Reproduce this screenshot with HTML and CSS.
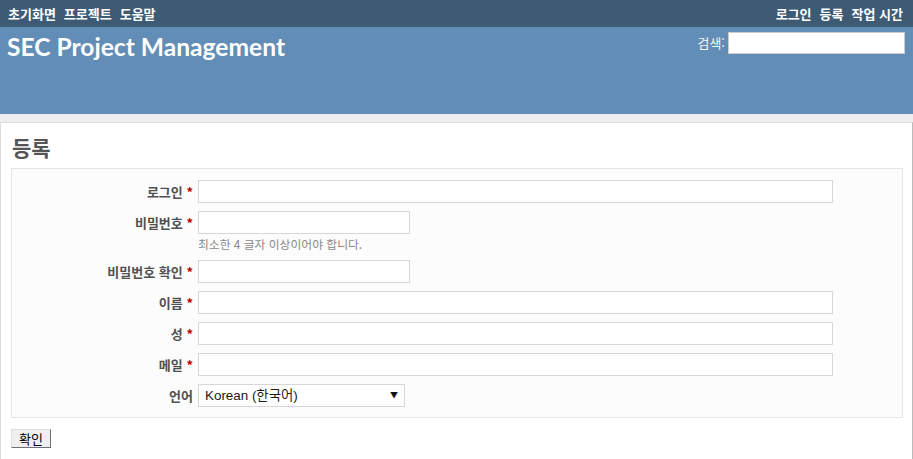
FILE: index.html
```html
<!DOCTYPE html>
<html lang="ko">
<head>
<meta charset="utf-8">
<title>등록 - SEC Project Management</title>
<link rel="stylesheet" href="styles.css">
</head>
<body>
<div class="top-menu">
  <ul class="menu">
    <li><a href="#">초기화면</a></li>
    <li><a href="#">프로젝트</a></li>
    <li><a href="#">도움말</a></li>
  </ul>
  <ul class="menu account">
    <li><a href="#">로그인</a></li>
    <li><a href="#">등록</a></li>
    <li><a href="#">작업 시간</a></li>
  </ul>
</div>
<div class="header">
  <h1 class="title">SEC Project Management</h1>
  <div class="search">
    <label class="search-label" for="q">검색:</label>
    <input class="search-input" id="q" type="text">
  </div>
</div>
<div class="main">
  <div class="content">
    <h2 class="page-title">등록</h2>
    <form class="box">
      <div class="row">
        <label class="lbl">로그인 <span class="req">*</span></label>
        <input class="field wide" type="text">
      </div>
      <div class="row row-hint">
        <div class="row-line">
          <label class="lbl">비밀번호 <span class="req">*</span></label>
          <input class="field short" type="password">
        </div>
        <div class="hint">최소한 4 글자 이상이어야 합니다.</div>
      </div>
      <div class="row">
        <label class="lbl">비밀번호 확인 <span class="req">*</span></label>
        <input class="field short" type="password">
      </div>
      <div class="row">
        <label class="lbl">이름 <span class="req">*</span></label>
        <input class="field wide" type="text">
      </div>
      <div class="row">
        <label class="lbl">성 <span class="req">*</span></label>
        <input class="field wide" type="text">
      </div>
      <div class="row">
        <label class="lbl">메일 <span class="req">*</span></label>
        <input class="field wide" type="text">
      </div>
      <div class="row last">
        <label class="lbl">언어</label>
        <span class="select-wrap">
          <select class="select">
            <option>Korean (한국어)</option>
          </select>
          <span class="arrow">▼</span>
        </span>
      </div>
    </form>
    <button class="submit" type="button">확인</button>
  </div>
</div>
</body>
</html>
```

FILE: styles.css
```css
html, body {
  margin: 0;
  padding: 0;
  background: #ffffff;
}
body {
  font-family: "Noto Sans CJK KR", "Liberation Sans", sans-serif;
  font-size: 12px;
  color: #333;
  width: 913px;
  height: 459px;
  overflow: hidden;
}
.top-menu {
  background: #3e5b76;
  height: 27px;
  display: flex;
  justify-content: space-between;
  padding: 0 10px 0 8px;
}
.menu {
  list-style: none;
  margin: 0;
  padding: 0;
  display: flex;
  gap: 8px;
}
.menu a {
  color: #ffffff;
  text-decoration: none;
  font-weight: bold;
  font-size: 13px;
  line-height: 27px;
  display: block;
}
.header {
  background: #628db6;
  height: 87px;
  display: flex;
  justify-content: space-between;
  align-items: flex-start;
  padding: 0 8px 0 7px;
}
.title {
  margin: 5px 0 0 0;
  font-family: Lato, "Liberation Sans", sans-serif;
  font-weight: bold;
  font-size: 24.6px;
  line-height: 30px;
  color: #ffffff;
}
.search {
  display: flex;
  align-items: center;
  margin-top: 5px;
  gap: 3px;
}
.search-label {
  color: #f4f4f4;
  font-size: 13px;
  line-height: 22px;
}
.search-input {
  box-sizing: border-box;
  width: 177px;
  height: 22px;
  border: 1px solid #cccccc;
  background: #ffffff;
  margin: 0;
  padding: 2px;
}
.main {
  background: #eeeeee;
  padding-top: 8px;
}
.content {
  background: #ffffff;
  border-top: 1px solid #dcdcdc;
  border-left: 1px solid #dcdcdc;
  border-right: 1px solid #bbbbbb;
  padding: 10px 9px 20px 10px;
  min-height: 300px;
}
.page-title {
  margin: 0 0 7px 1px;
  font-size: 21px;
  line-height: 28px;
  font-weight: bold;
  color: #555555;
}
.box {
  background: #fcfcfc;
  border: 1px solid #e4e4e4;
  padding: 11px 0 10px 0;
  display: flex;
  flex-direction: column;
  gap: 8px;
}
.row, .row-line {
  display: flex;
  align-items: center;
}
.row-hint {
  flex-direction: column;
  align-items: stretch;
}
.lbl {
  width: 181px;
  margin-right: 5px;
  text-align: right;
  font-weight: bold;
  font-size: 13px;
  line-height: 16px;
  color: #505050;
  white-space: nowrap;
}
.req {
  color: #bb0000;
}
.field {
  box-sizing: border-box;
  height: 23px;
  border: 1px solid #d7d7d7;
  background: #ffffff;
  margin: 0;
  padding: 2px;
}
.wide {
  width: 635px;
}
.short {
  width: 212px;
}
.hint {
  margin: 2px 0 0 186px;
  font-size: 11.8px;
  line-height: 16px;
  color: #8a8a8a;
}
.select-wrap {
  position: relative;
  display: block;
  width: 207px;
  height: 23px;
}
.select {
  appearance: none;
  -webkit-appearance: none;
  box-sizing: border-box;
  width: 207px;
  height: 23px;
  border: 1px solid #d7d7d7;
  background: #ffffff;
  margin: 0;
  padding: 0 0 0 6px;
  font-family: "Liberation Sans", "Noto Sans CJK KR", sans-serif;
  font-size: 13.4px;
  color: #1a1a1a;
}
.arrow {
  position: absolute;
  right: 7px;
  top: 6px;
  font-size: 8px;
  line-height: 10px;
  color: #111111;
  pointer-events: none;
}
.submit {
  margin-top: 11px;
  box-sizing: border-box;
  width: 40px;
  height: 19px;
  padding: 0;
  background: #efefef;
  border: 1px solid;
  border-color: #e0e0e0 #707070 #707070 #e0e0e0;
  font-family: "Noto Sans CJK KR", sans-serif;
  font-size: 13px;
  line-height: 15px;
  color: #000000;
}
```
